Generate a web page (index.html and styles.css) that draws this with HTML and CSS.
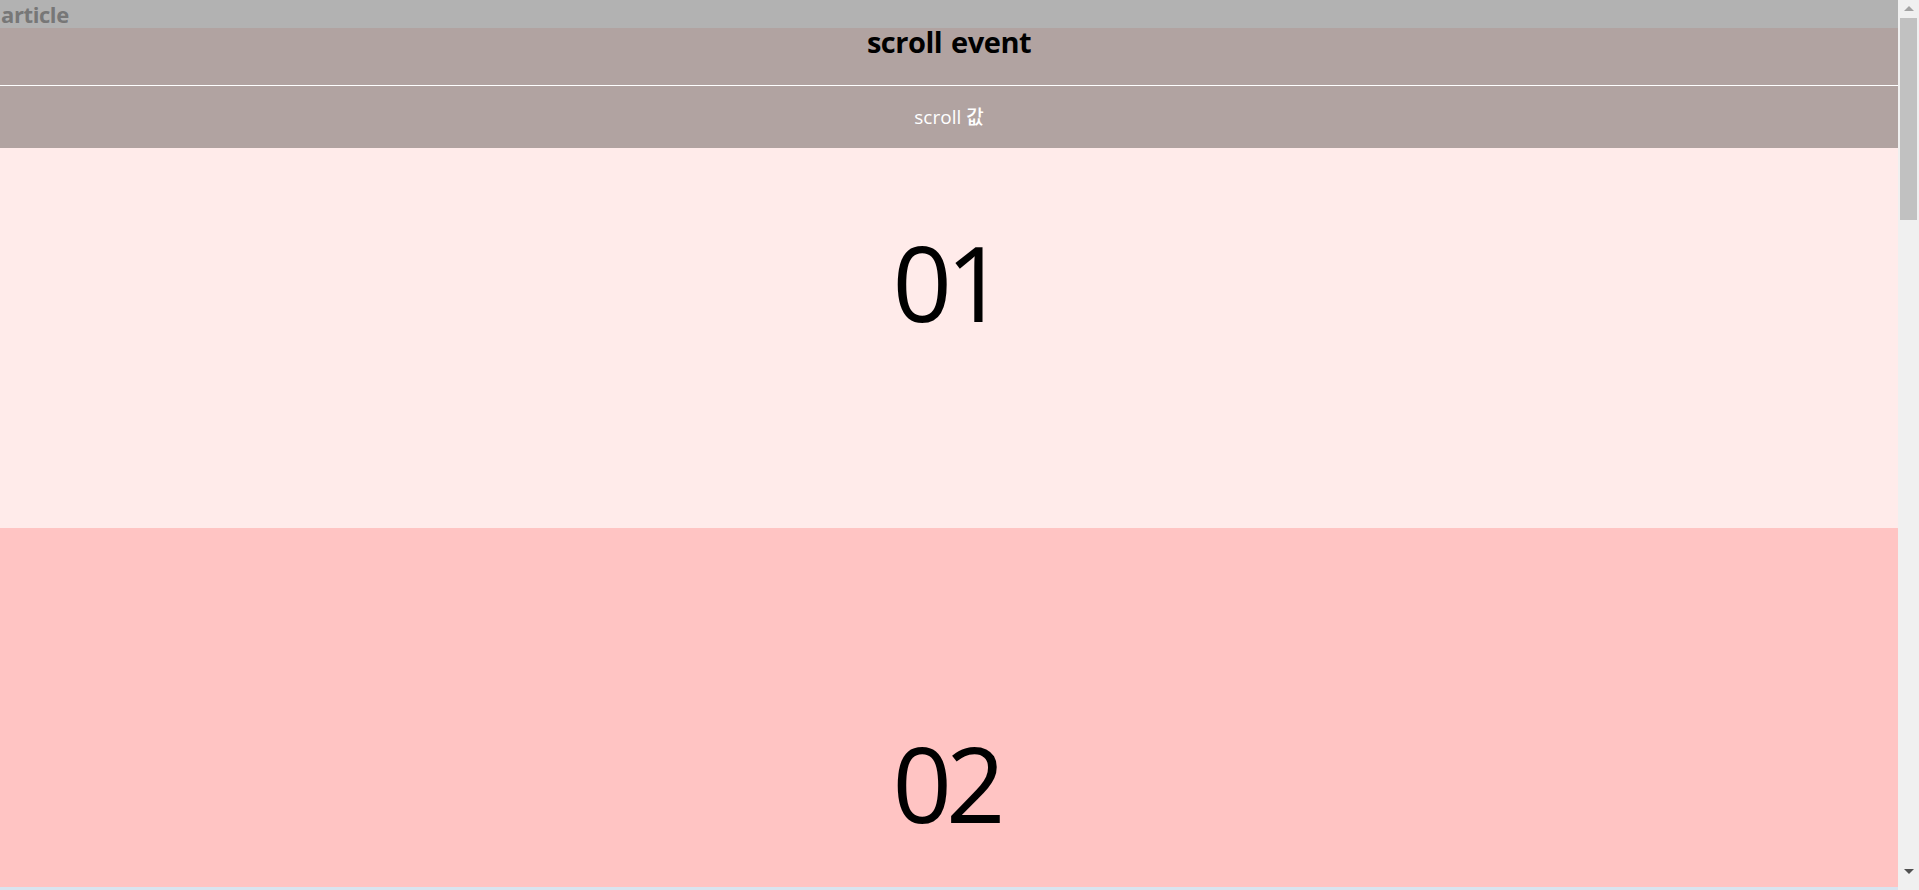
FILE: index.html
```html
<!DOCTYPE html>
<html lang="ko">
<head>
<meta charset="utf-8">
<title>scroll event</title>
<link rel="stylesheet" href="styles.css">
</head>
<body>
<div class="page">
  <div class="content">
    <div class="topbar"><h2 class="topbar-title">article</h2></div>
    <header class="header">
      <h1 class="header-title">scroll event</h1>
    </header>
    <div class="scroll-value">scroll 값</div>
    <section class="sec sec1"><p class="num">01</p></section>
    <section class="sec sec2"><p class="num">02</p></section>
    <div class="frame-edge"></div>
  </div>
  <div class="scrollbar">
    <div class="sb-btn"><span class="arrow-up"></span></div>
    <div class="sb-track"><div class="sb-thumb"></div></div>
    <div class="sb-btn sb-btn-down"><span class="arrow-down"></span></div>
  </div>
</div>
</body>
</html>
```
FILE: styles.css
```css
html, body {
  margin: 0;
  padding: 0;
}
body {
  font-family: "Open Sans", "Noto Sans CJK KR", sans-serif;
  overflow: hidden;
}
.page {
  display: flex;
  width: 1919px;
  height: 890px;
  overflow: hidden;
}
.content {
  flex: 1;
  display: flex;
  flex-direction: column;
  min-width: 0;
}
.topbar {
  height: 28px;
  background: #b2b2b2;
  flex: none;
}
.topbar-title {
  margin: 0;
  padding-left: 1px;
  font-size: 22px;
  line-height: 28px;
  font-weight: 700;
  color: #777777;
  letter-spacing: -0.4px;
}
.header {
  height: 57px;
  background: #b1a3a1;
  border-bottom: 1px solid #ffffff;
  flex: none;
}
.header-title {
  margin: 0;
  text-align: center;
  font-size: 29px;
  line-height: 27px;
  font-weight: 700;
  color: #000;
  letter-spacing: -0.5px;
  word-spacing: 2px;
}
.scroll-value {
  height: 62px;
  line-height: 62px;
  background: #b1a3a1;
  color: #ffffff;
  text-align: center;
  font-size: 19px;
  font-weight: 500;
  flex: none;
}
.sec {
  flex: none;
  text-align: center;
}
.sec1 {
  height: 380px;
  background: #ffebea;
  padding-top: 82px;
  box-sizing: border-box;
}
.sec2 {
  height: 359px;
  background: #ffc4c3;
  padding-top: 203px;
  box-sizing: border-box;
}
.num {
  margin: 0;
  padding-right: 6px;
  font-size: 104px;
  line-height: 104px;
  color: #000;
  letter-spacing: -6px;
}
.frame-edge {
  flex: 1;
  background: #d9e4ef;
}
.scrollbar {
  width: 21px;
  flex: none;
  background: #f0f0f0;
  display: flex;
  flex-direction: column;
}
.sb-btn {
  height: 17px;
  display: flex;
  align-items: center;
  justify-content: center;
  flex: none;
}
.sb-track {
  flex: 1;
  padding: 1px 2px 0 2px;
}
.sb-thumb {
  height: 202px;
  background: #c1c1c1;
}
.sb-btn-down {
  height: 24px;
  align-items: flex-start;
  padding-top: 3px;
  box-sizing: border-box;
}
.arrow-up {
  width: 0;
  height: 0;
  border-left: 5px solid transparent;
  border-right: 5px solid transparent;
  border-bottom: 5px solid #a3a3a3;
}
.arrow-down {
  width: 0;
  height: 0;
  border-left: 5px solid transparent;
  border-right: 5px solid transparent;
  border-top: 5px solid #505050;
}
```
